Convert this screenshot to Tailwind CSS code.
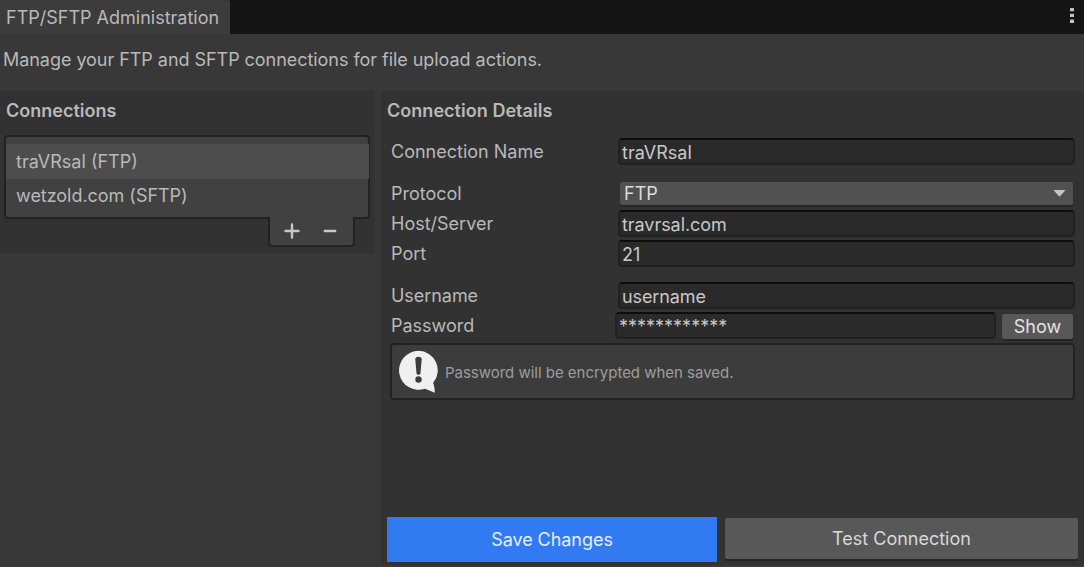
<!DOCTYPE html>
<html lang="en">
  <head>
    <meta charset="UTF-8" />
    <title>FTP/SFTP Administration</title>
    <script src="https://cdn.jsdelivr.net/npm/@tailwindcss/browser@4"></script>
  </head>
  <body class="h-[567px] w-[1084px] overflow-hidden bg-[#383838] font-['Inter',sans-serif] text-[18px] leading-[26px] text-[#b9b9b9] flex flex-col">
    <!-- Tab bar -->
    <header class="flex h-[34px] shrink-0 justify-between bg-[#141414]">
      <div class="w-[230px] rounded-tr-[2px] bg-[#3c3c3c] pt-[5px] pl-[6px] whitespace-nowrap">FTP/SFTP Administration</div>
      <svg class="mt-[7px] mr-[9px]" width="6" height="18" fill="#c4c4c4">
        <rect x="1" y="1" width="4" height="3.3" rx=".6" />
        <rect x="1" y="6.7" width="4" height="3.3" rx=".6" />
        <rect x="1" y="12.4" width="4" height="3.6" rx=".6" />
      </svg>
    </header>

    <p class="h-[57px] shrink-0 pt-[13px] pl-[3px] tracking-[-0.045px] whitespace-nowrap">Manage your FTP and SFTP connections for file upload actions.</p>

    <main class="flex h-[474px] shrink-0 items-start gap-[6px]">
      <!-- Connections -->
      <section class="h-[162px] w-[375px] shrink-0 bg-[#323232] pl-[4px]">
        <h2 class="h-[44px] pt-[7px] pl-[2px] font-semibold">Connections</h2>
        <div class="h-[84px] w-[366px] rounded-[4px] border-2 border-[#222] bg-[#414141] pt-[7px]">
          <div class="-mr-px h-[35px] bg-[#4d4d4d] pt-[5px] pl-[10px]">traVRsal (FTP)</div>
          <div class="pt-[4px] pl-[10px] tracking-[-0.03px]">wetzold.com (SFTP)</div>
        </div>
        <div class="relative -mt-[2px] ml-[264px] flex h-[30px] w-[87px] rounded-b-[4px] border-2 border-t-0 border-[#222] bg-[#414141]">
          <svg width="83" height="28" stroke="#c8c8c8" stroke-width="2.4" stroke-linecap="round">
            <path d="M15.5 14H28.5M22 7.5V20.5M54.8 14H65.2" />
          </svg>
        </div>
      </section>

      <!-- Connection details -->
      <section class="flex h-[474px] grow flex-col bg-[#323232] pl-[6px]">
        <h2 class="h-[47px] pt-[7px] font-semibold tracking-[0.04px]">Connection Details</h2>

        <div class="flex h-[42px] pl-[4px]">
          <label class="w-[227px] pt-[1px]">Connection Name</label>
          <div class="h-[27px] w-[457px] rounded-[4px] border-2 border-[#212121] border-t-[#0d0d0d] bg-[#2a2a2a] pl-[2px] leading-[25px] text-[#c8c8c8]">traVRsal</div>
        </div>
        <div class="flex h-[30px] pl-[4px]">
          <label class="w-[229px] pt-[1px]">Protocol</label>
          <div class="mt-[2px] flex h-[23px] w-[453px] items-center justify-between rounded-[2px] bg-[#515151] pr-[8px] pl-[4px] text-[#dcdcdc] shadow-[0_2px_0_#262626,0_0_0_1px_#303030]">
            <span>FTP</span>
            <svg width="11" height="7" fill="#c4c4c4"><path d="M0 0H11V.8L5.5 6.8L0 .8Z" /></svg>
          </div>
        </div>
        <div class="flex h-[30px] pl-[4px]">
          <label class="w-[227px] pt-[1px]">Host/Server</label>
          <div class="h-[27px] w-[457px] rounded-[4px] border-2 border-[#212121] border-t-[#0d0d0d] bg-[#2a2a2a] pl-[2px] leading-[25px] tracking-[-0.05px] text-[#c8c8c8]">travrsal.com</div>
        </div>
        <div class="flex h-[42px] pl-[4px]">
          <label class="w-[227px] pt-[1px]">Port</label>
          <div class="h-[27px] w-[457px] rounded-[4px] border-2 border-[#212121] border-t-[#0d0d0d] bg-[#2a2a2a] pl-[2px] leading-[25px] text-[#c8c8c8]">21</div>
        </div>
        <div class="flex h-[30px] pl-[4px]">
          <label class="w-[227px] pt-[1px] tracking-[-0.05px]">Username</label>
          <div class="h-[27px] w-[457px] rounded-[4px] border-2 border-[#212121] border-t-[#0d0d0d] bg-[#2a2a2a] pl-[2px] leading-[25px] tracking-[-0.1px] text-[#c8c8c8]">username</div>
        </div>
        <div class="flex h-[31px] pl-[4px]">
          <label class="w-[224px] pt-[1px]">Password</label>
          <div class="h-[27px] w-[381px] rounded-[4px] border-2 border-[#212121] border-t-[#0d0d0d] bg-[#2a2a2a] pl-[2px] leading-[25px] text-[#c8c8c8]">************</div>
          <button class="mt-[2px] ml-[6px] h-[25px] w-[71px] rounded-[2px] bg-[#585858] text-[#e4e4e4] shadow-[0_2px_0_#242424]">Show</button>
        </div>

        <div class="ml-[3px] flex h-[57px] w-[685px] items-center rounded-[4px] border-2 border-[#222] bg-[#3c3c3c] pl-[7px] text-[15px] text-[#9d9d9d]">
          <svg class="mr-[6px]" width="40" height="43" viewBox="0 0 40 43">
            <path fill="#f0f0f0" d="M19.500 .8A19.500 19.500 0 1 0 26 38.700Q31 40.500 35.800 42.700Q35.800 37.500 34.200 32.800A19.500 19.500 0 0 0 19.500 .8Z" />
            <path fill="#3c3c3c" d="M16.300 9.500Q16.300 6.800 19.500 6.800T22.700 9.500L21.500 23.200Q21.300 24.700 19.500 24.700T17.500 23.200Z" />
            <circle cx="19.500" cy="29.500" r="3.200" fill="#3c3c3c" />
          </svg>
          <span class="pt-[2px] tracking-[-0.02px]">Password will be encrypted when saved.</span>
        </div>

        <div class="mt-[117px] flex gap-[8px]">
          <button class="h-[45px] w-[330px] bg-[#327af2] text-[#e6eefb] tracking-[-0.05px]">Save Changes</button>
          <button class="mt-[1px] h-[41px] w-[353px] rounded-[2px] bg-[#585858] pt-px text-[#d8d8d8] shadow-[0_2px_0_#242424]">Test Connection</button>
        </div>
      </section>
    </main>
  </body>
</html>
